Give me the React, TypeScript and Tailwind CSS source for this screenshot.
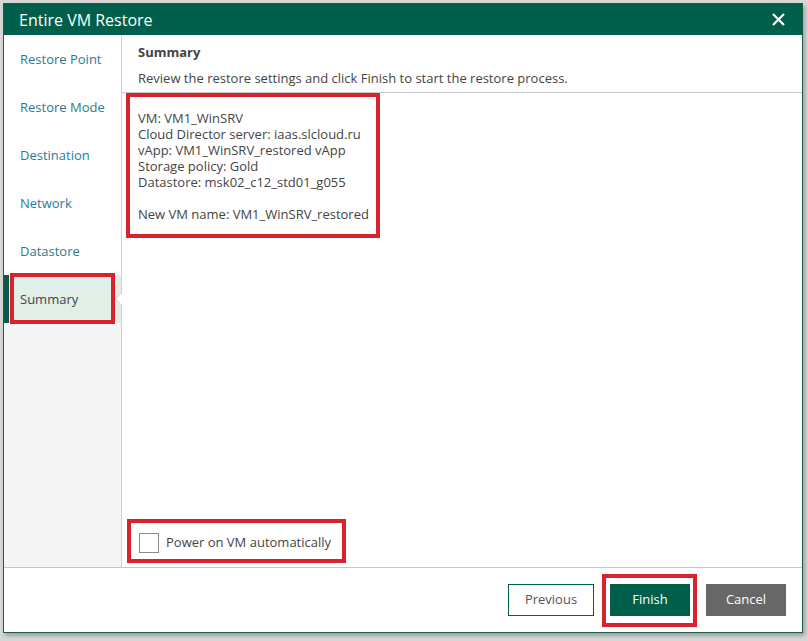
import React from "react";

const font = { fontFamily: '"Open Sans", "Noto Sans", sans-serif' };

const steps = ["Restore Point", "Restore Mode", "Destination", "Network", "Datastore", "Summary"];

export default function App() {
  return (
    <div className="w-[808px] h-[641px] bg-[#d5d8d7] pt-[3px] pl-[3px] overflow-hidden" style={font}>
      <div className="w-[800px] h-[630px] border border-[#1e5a49] bg-white flex flex-col shadow-[2px_3px_4px_rgba(0,0,0,0.25)]">
        {/* Header */}
        <div className="h-[31px] bg-[#005f4b] flex items-center justify-between pl-[15px] pr-[14px]">
          <span className="text-white text-[16px] leading-none">Entire VM Restore</span>
          <svg width="13" height="13" viewBox="0 0 13 13" className="mr-[3px]">
            <path d="M1 1 L12 12 M12 1 L1 12" stroke="white" strokeWidth="2.2" />
          </svg>
        </div>
        {/* Body */}
        <div className="flex flex-1 min-h-0">
          {/* Sidebar */}
          <div className="w-[118px] border-r border-[#d0d0d0] bg-[#f5f5f5] flex flex-col">
            {steps.map((s) => {
              const sel = s === "Summary";
              return (
                <div
                  key={s}
                  className={
                    sel
                      ? "relative h-[48px] flex items-center bg-[#e1efe8] border-l-[5px] border-[#0b5a47] pl-[11px] pt-[1px] text-[13px] text-[#444]"
                      : "h-[48px] flex items-center bg-white pl-[16px] pt-[1px] text-[13px] text-[#2b7b90]"
                  }
                >
                  {s}
                  {sel && (
                    <>
                      <div className="absolute left-[1px] top-[-2px] w-[105px] h-[51px] border-[4px] border-[#d8222d]" />
                      <div className="absolute right-[-1px] top-[17px] w-0 h-0 border-y-[7px] border-y-transparent border-r-[7px] border-r-[#d0d0d0]" />
                      <div className="absolute right-[-1px] top-[18px] w-0 h-0 border-y-[6px] border-y-transparent border-r-[6px] border-r-white" />
                    </>
                  )}
                </div>
              );
            })}
          </div>
          {/* Main */}
          <div className="flex-1 flex flex-col">
            <div className="px-[16px] pt-[9px] pb-[6px] border-b border-[#c8c8c8]">
              <div className="text-[13px] font-bold text-[#444] leading-[16px]">Summary</div>
              <div className="text-[13px] text-[#444] leading-[16px] mt-[10px]">
                Review the restore settings and click Finish to start the restore process.
              </div>
            </div>
            <div className="ml-[4px] w-[254px] border-[4px] border-[#d8222d] pl-[8px] pt-[13px] pb-[12px] text-[13px] leading-[16px] text-[#444]">
              <div>VM: VM1_WinSRV</div>
              <div>Cloud Director server: iaas.slcloud.ru</div>
              <div>vApp: VM1_WinSRV_restored vApp</div>
              <div>Storage policy: Gold</div>
              <div>Datastore: msk02_c12_std01_g055</div>
              <div className="h-[16px]" />
              <div>New VM name: VM1_WinSRV_restored</div>
            </div>
            <div className="flex-1" />
            <div className="ml-[5px] mb-[4px] w-[219px] h-[44px] border-[4px] border-[#d8222d] flex items-center pl-[8px] pt-[3px]">
              <div className="w-[20px] h-[20px] border border-[#8a8a8a] bg-white" />
              <span className="ml-[7px] text-[13px] text-[#444]">Power on VM automatically</span>
            </div>
          </div>
        </div>
        {/* Footer */}
        <div className="h-[65px] border-t border-[#c8c8c8] flex items-center justify-end pr-[16px] gap-[16px]">
          <button className="w-[86px] h-[32px] border border-[#005f4b] bg-white text-[13px] text-[#555]" style={font}>
            Previous
          </button>
          <div className="relative">
            <div className="absolute left-[-8px] top-[-10px] w-[95px] h-[53px] border-[4px] border-[#d8222d]" />
            <button className="relative w-[80px] h-[32px] bg-[#005f4b] text-[13px] text-white" style={font}>
              Finish
            </button>
          </div>
          <button className="w-[80px] h-[32px] bg-[#676767] text-[13px] text-white" style={font}>
            Cancel
          </button>
        </div>
      </div>
    </div>
  );
}
